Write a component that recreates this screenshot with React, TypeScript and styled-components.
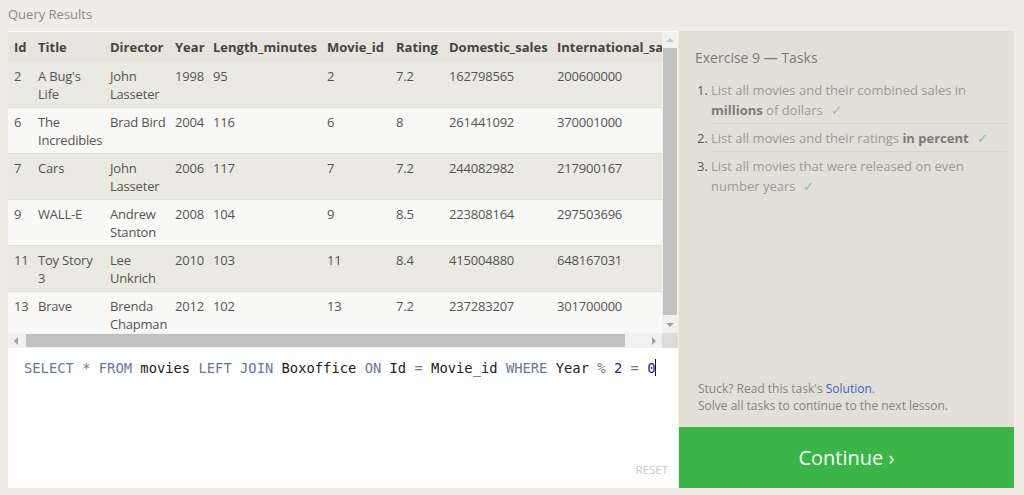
import React from "react";
import styled, { createGlobalStyle } from "styled-components";

const Global = createGlobalStyle`
  html, body { margin: 0; padding: 0; background: #f0ede6; }
  body { font-family: "Open Sans", "Noto Sans", sans-serif; }
  * { box-sizing: border-box; }
`;

const Page = styled.div`
  width: 1024px;
  height: 495px;
  padding: 0 8px 7px 8px;
  display: flex;
  flex-direction: column;
  overflow: hidden;
`;

const PageTitle = styled.div`
  height: 31px;
  line-height: 28px;
  font-size: 13px;
  color: #8a8a86;
`;

const Main = styled.div`
  flex: 1;
  display: flex;
  gap: 1px;
  min-height: 0;
`;

const LeftColumn = styled.div`
  width: 670px;
  display: flex;
  flex-direction: column;
  background: #fff;
  padding-top: 1px;
`;

const TableArea = styled.div`
  display: grid;
  grid-template-columns: 654px 16px;
  grid-template-rows: 301px 15px;
`;

const Viewport = styled.div`
  overflow: hidden;
  background: #f8f8f6;
`;

const Table = styled.table`
  table-layout: fixed;
  border-collapse: collapse;
  width: 700px;
  font-size: 13px;
  color: #555;
`;

const Th = styled.th`
  text-align: left;
  font-weight: 700;
  color: #444;
  height: 30px;
  padding: 0 0 0 6px;
  white-space: nowrap;
  overflow: hidden;
  background: #e6e4dd;
`;

const Tr = styled.tr<{ $odd: boolean }>`
  background: ${(p) => (p.$odd ? "#eae9e2" : "#f8f8f6")};
  border-bottom: 1px solid #e0dfd8;
`;

const Td = styled.td<{ $pr: number }>`
  vertical-align: top;
  padding: 5px ${(p) => p.$pr}px 4px 6px;
  height: 45px;
  line-height: 18px;
  letter-spacing: -0.2px;
  overflow: hidden;
`;

const VBar = styled.div`
  background: #f1f1f1;
  display: flex;
  flex-direction: column;
  align-items: center;
`;

const HBar = styled.div`
  background: #f1f1f1;
  display: flex;
  align-items: center;
`;

const Corner = styled.div`
  background: #dcdcdc;
`;

const ArrowBox = styled.div<{ $w: number; $h: number }>`
  width: ${(p) => p.$w}px;
  height: ${(p) => p.$h}px;
  display: flex;
  align-items: center;
  justify-content: center;
  flex-shrink: 0;
`;

const VThumb = styled.div`
  width: 14px;
  flex: 1;
  margin: 0 0 2px 0;
  background: #c1c1c1;
`;

const HThumb = styled.div`
  height: 13px;
  width: 599px;
  margin-left: 2px;
  background: #c1c1c1;
`;

const HFill = styled.div`
  flex: 1;
`;

const Editor = styled.div`
  flex: 1;
  position: relative;
  background: #fff;
  padding: 11px 16px;
  font-family: "DejaVu Sans Mono", monospace;
  font-size: 13.8px;
  line-height: 18px;
  color: #222;
  white-space: pre;
`;

const Kw = styled.span`
  color: #6677a3;
`;
const Op = styled.span`
  color: #777;
`;
const Num = styled.span`
  color: #1d1d9a;
`;
const Caret = styled.span`
  display: inline-block;
  width: 1px;
  height: 17px;
  background: #111;
  vertical-align: -3px;
`;

const ResetBtn = styled.div`
  position: absolute;
  right: 10px;
  bottom: 9px;
  font-size: 11.5px;
  color: #c8c8c8;
  font-family: "Open Sans", sans-serif;
`;

const RightPanel = styled.div`
  width: 335px;
  background: #e2e0d6;
  display: flex;
  flex-direction: column;
`;

const PanelBody = styled.div`
  flex: 1;
  padding: 17px 7px 0 16px;
  display: flex;
  flex-direction: column;
`;

const PanelTitle = styled.div`
  font-size: 14px;
  line-height: 20px;
  color: #7a7a76;
  margin-bottom: 8px;
`;

const TaskList = styled.div`
  display: flex;
  flex-direction: column;
`;

const TaskItem = styled.div`
  display: flex;
  font-size: 13px;
  line-height: 20px;
`;

const TaskNum = styled.span`
  width: 16px;
  padding-left: 2px;
  padding-top: 4px;
  color: #5a5a58;
  flex-shrink: 0;
`;

const TaskText = styled.div<{ $last?: boolean }>`
  flex: 1;
  color: #9b9b97;
  padding: 4px 0 3px 0;
  border-bottom: ${(p) => (p.$last ? "none" : "1px solid #d6d4ca")};
  b {
    color: #7c7c78;
    font-weight: 700;
  }
`;

const Check = styled.span`
  color: #86c48e;
  margin-left: 8px;
  font-size: 13px;
`;

const Spacer = styled.div`
  flex: 1;
`;

const Stuck = styled.div`
  font-size: 12px;
  line-height: 17px;
  color: #858581;
  padding-left: 3px;
  margin-bottom: 13px;
  a {
    color: #3a62c4;
    text-decoration: none;
  }
`;

const ContinueButton = styled.button`
  height: 61px;
  border: none;
  background: #3bb54a;
  color: #f4fff4;
  font-family: "Open Sans", sans-serif;
  font-size: 20px;
  cursor: pointer;
  padding: 0;
`;

const Tri = ({ dir }: { dir: "up" | "down" | "left" | "right" }) => {
  const pts = {
    up: "0,4 4,0 8,4",
    down: "0,0 8,0 4,4",
    left: "4,0 4,8 0,4",
    right: "0,0 0,8 4,4",
  }[dir];
  const vertical = dir === "up" || dir === "down";
  return (
    <svg width={vertical ? 8 : 4} height={vertical ? 4 : 8} viewBox={vertical ? "0 0 8 4" : "0 0 4 8"}>
      <polygon points={pts} fill={dir === "up" ? "#c8c8c8" : "#a0a0a0"} />
    </svg>
  );
};

const columns = [
  { name: "Id", w: 24, pr: 0 },
  { name: "Title", w: 72, pr: 6 },
  { name: "Director", w: 65, pr: 0 },
  { name: "Year", w: 38, pr: 0 },
  { name: "Length_minutes", w: 114, pr: 0 },
  { name: "Movie_id", w: 69, pr: 0 },
  { name: "Rating", w: 53, pr: 0 },
  { name: "Domestic_sales", w: 108, pr: 0 },
  { name: "International_sales", w: 157, pr: 0 },
];

const rows = [
  ["2", "A Bug's Life", "John Lasseter", "1998", "95", "2", "7.2", "162798565", "200600000"],
  ["6", "The Incredibles", "Brad Bird", "2004", "116", "6", "8", "261441092", "370001000"],
  ["7", "Cars", "John Lasseter", "2006", "117", "7", "7.2", "244082982", "217900167"],
  ["9", "WALL-E", "Andrew Stanton", "2008", "104", "9", "8.5", "223808164", "297503696"],
  ["11", "Toy Story 3", "Lee Unkrich", "2010", "103", "11", "8.4", "415004880", "648167031"],
  ["13", "Brave", "Brenda Chapman", "2012", "102", "13", "7.2", "237283207", "301700000"],
];

export default function App() {
  return (
    <>
      <Global />
      <Page>
        <PageTitle>Query Results</PageTitle>
        <Main>
          <LeftColumn>
            <TableArea>
              <Viewport>
                <Table>
                  <colgroup>
                    {columns.map((c) => (
                      <col key={c.name} style={{ width: c.w }} />
                    ))}
                  </colgroup>
                  <thead>
                    <tr>
                      {columns.map((c) => (
                        <Th key={c.name}>{c.name}</Th>
                      ))}
                    </tr>
                  </thead>
                  <tbody>
                    {rows.map((r, i) => (
                      <Tr key={r[0]} $odd={i % 2 === 0}>
                        {r.map((v, j) => (
                          <Td key={j} $pr={columns[j].pr}>
                            {v}
                          </Td>
                        ))}
                      </Tr>
                    ))}
                  </tbody>
                </Table>
              </Viewport>
              <VBar>
                <ArrowBox $w={16} $h={16}>
                  <Tri dir="up" />
                </ArrowBox>
                <VThumb />
                <ArrowBox $w={16} $h={16}>
                  <Tri dir="down" />
                </ArrowBox>
              </VBar>
              <HBar>
                <ArrowBox $w={16} $h={15}>
                  <Tri dir="left" />
                </ArrowBox>
                <HThumb />
                <HFill />
                <ArrowBox $w={16} $h={15}>
                  <Tri dir="right" />
                </ArrowBox>
              </HBar>
              <Corner />
            </TableArea>
            <Editor>
              <Kw>SELECT</Kw> <Op>*</Op> <Kw>FROM</Kw> movies <Kw>LEFT</Kw> <Kw>JOIN</Kw> Boxoffice <Kw>ON</Kw> Id{" "}
              <Op>=</Op> Movie_id <Kw>WHERE</Kw> Year <Op>%</Op> <Num>2</Num> <Op>=</Op> <Num>0</Num>
              <Caret />
              <ResetBtn>RESET</ResetBtn>
            </Editor>
          </LeftColumn>
          <RightPanel>
            <PanelBody>
              <PanelTitle>Exercise 9 — Tasks</PanelTitle>
              <TaskList>
                <TaskItem>
                  <TaskNum>1.</TaskNum>
                  <TaskText>
                    List all movies and their combined sales in <b>millions</b> of dollars
                    <Check>✓</Check>
                  </TaskText>
                </TaskItem>
                <TaskItem>
                  <TaskNum>2.</TaskNum>
                  <TaskText>
                    List all movies and their ratings <b>in percent</b>
                    <Check>✓</Check>
                  </TaskText>
                </TaskItem>
                <TaskItem>
                  <TaskNum>3.</TaskNum>
                  <TaskText $last>
                    List all movies that were released on even number years
                    <Check>✓</Check>
                  </TaskText>
                </TaskItem>
              </TaskList>
              <Spacer />
              <Stuck>
                Stuck? Read this task's <a href="#">Solution</a>.
                <br />
                Solve all tasks to continue to the next lesson.
              </Stuck>
            </PanelBody>
            <ContinueButton>Continue ›</ContinueButton>
          </RightPanel>
        </Main>
      </Page>
    </>
  );
}
